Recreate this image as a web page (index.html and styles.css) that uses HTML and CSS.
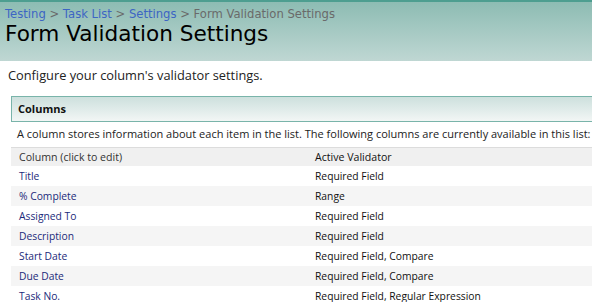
FILE: index.html
```html
<!DOCTYPE html>
<html>
<head>
<meta charset="utf-8">
<link rel="stylesheet" href="styles.css">
</head>
<body>
<div class="header">
  <div class="crumbs"><a href="#">Testing</a> &gt; <a href="#">Task List</a> &gt; <a href="#">Settings</a> &gt; Form Validation Settings</div>
  <h1 class="title">Form Validation Settings</h1>
</div>
<div class="content">
  <p class="intro">Configure your column's validator settings.</p>
  <div class="section">
    <div class="section-bar">Columns</div>
    <p class="desc">A column stores information about each item in the list. The following columns are currently available in this list:</p>
    <div class="table">
      <div class="row head"><span class="c1">Column (click to edit)</span><span class="c2">Active Validator</span></div>
      <div class="row"><a class="c1" href="#">Title</a><span class="c2">Required Field</span></div>
      <div class="row alt"><a class="c1" href="#">% Complete</a><span class="c2">Range</span></div>
      <div class="row"><a class="c1" href="#">Assigned To</a><span class="c2">Required Field</span></div>
      <div class="row alt"><a class="c1" href="#">Description</a><span class="c2">Required Field</span></div>
      <div class="row"><a class="c1" href="#">Start Date</a><span class="c2">Required Field, Compare</span></div>
      <div class="row alt"><a class="c1" href="#">Due Date</a><span class="c2">Required Field, Compare</span></div>
      <div class="row"><a class="c1" href="#">Task No.</a><span class="c2">Required Field, Regular Expression</span></div>
    </div>
  </div>
</div>
</body>
</html>
```
FILE: styles.css
```css
html, body { margin: 0; padding: 0; background: #fff; }
body { font-family: "Open Sans", "Noto Sans", sans-serif; font-size: 11px; color: #000; overflow: hidden; }
a { text-decoration: none; }

.header {
  height: 59px;
  border-top: 2px solid #4d9e90;
  background: linear-gradient(to bottom, #8dbcb3 0%, #bfd7d3 100%);
  padding-left: 5px;
}
.crumbs {
  font-family: "DejaVu Sans", Verdana, sans-serif;
  font-size: 11.6px;
  color: #6a6a6a;
  padding-top: 6px;
  line-height: 13px;
}
.crumbs a { color: #3d65c4; }
.title {
  margin: 0;
  font-family: "DejaVu Sans", Verdana, sans-serif;
  font-weight: normal;
  font-size: 21.6px;
  line-height: 26px;
  color: #000;
}

.content { padding-left: 8px; }
.intro { margin: 0; padding-top: 6px; line-height: 17px; font-size: 12.8px; color: #222; }
.section { margin-left: 3px; margin-top: 12px; }
.section-bar {
  height: 24px;
  line-height: 24px;
  border: 1px solid #79b4aa;
  border-right: none;
  background: linear-gradient(to bottom, #cde0dd 0%, #f2f6f5 100%);
  font-weight: bold;
  padding-left: 6px;
  color: #111;
}
.desc { margin: 0; padding: 4px 0 0 6px; line-height: 16px; color: #222; white-space: nowrap; }
.table { margin-top: 5px; }
.row { display: flex; height: 20px; line-height: 20px; font-size: 10.3px; }
.row.head { height: 18px; line-height: 18px; font-size: 10.6px; background: #f0f0f0; border-top: 1px solid #dcdcdc; color: #333; }
.row.alt { background: #f5f5f5; }
.c1 { width: 296px; padding-left: 8px; color: #1b2a7a; }
.head .c1 { color: #333; }
.c2 { color: #111; }
```
